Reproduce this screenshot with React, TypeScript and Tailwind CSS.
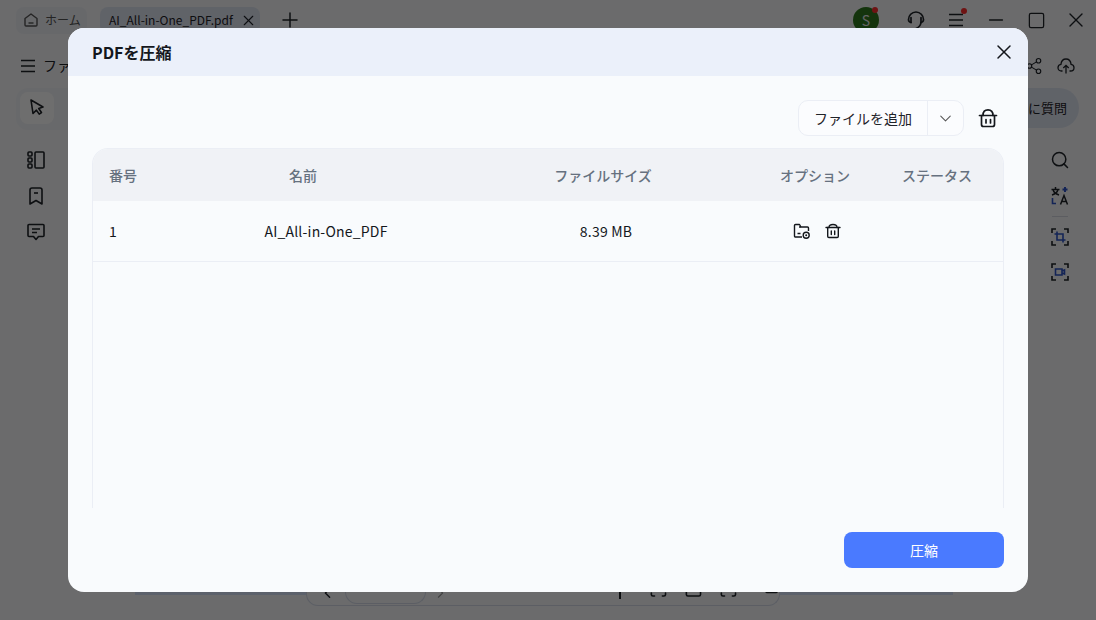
import { ChevronDown, ChevronLeft, ChevronRight, Minus, Plus, Scan, Search, Share2, Square, X } from 'lucide-react';

const jpFont = { fontFamily: '"Noto Sans CJK JP", "Noto Sans", sans-serif' };

function HomeIcon() {
  return (
    <svg width="16" height="16" viewBox="0 0 16 16" fill="none" stroke="currentColor" strokeWidth="1.4">
      <path d="M1 6.5 7 2l6 4.500V13a1 1 0 0 1-1 1H2a1 1 0 0 1-1-1z" strokeLinejoin="round" />
      <path d="M4.500 11h5" />
    </svg>
  );
}

function Headset() {
  return (
    <svg width="20" height="20" viewBox="0 0 20 20" fill="none" stroke="currentColor" strokeWidth="1.7" strokeLinecap="round">
      <path d="M5 12.500C3.400 12.200 2.500 11 2.500 9.500 2.500 5.500 5.800 2 10 2s7.500 3.500 7.500 7.500c0 1.500-.9 2.700-2.500 3" />
      <path d="M5 7.500v5M15 7.500v5" />
      <path d="M15 12.500c-.4 2.800-2 4.800-5 6" />
    </svg>
  );
}

function MenuLines({ size = 14 }: { size?: number }) {
  return (
    <svg width={size} height={size} viewBox="0 0 14 14" fill="none" stroke="currentColor" strokeWidth="1.5">
      <path d="M0 1.500h14M0 7h14M0 12.500h14" />
    </svg>
  );
}

function UploadCloud() {
  return (
    <svg width="18" height="18" viewBox="0 0 18 18" fill="none" stroke="currentColor" strokeWidth="1.3">
      <path d="M5.500 14H4.500C2.500 14 1 12.500 1 10.700c0-1.700 1.200-3 2.900-3.300C4.300 4.200 6.400 2 9 2s4.700 2.200 5.100 5.400c1.700.3 2.900 1.600 2.900 3.300 0 1.800-1.500 3.300-3.500 3.300h-1" />
      <path d="M9 16.500V8.500M6.300 11 9 8.300 11.700 11" />
    </svg>
  );
}

function CursorIcon() {
  return (
    <svg width="18" height="18" viewBox="0 0 18 18" fill="none" stroke="currentColor" strokeWidth="1.6" strokeLinejoin="round">
      <path d="M3 1 15 8l-4.300 1.500 2.800 4-2.300 1.600-2.800-4L5 14.500z" />
    </svg>
  );
}

function SidePanel() {
  return (
    <svg width="18" height="18" viewBox="0 0 18 18" fill="none" stroke="currentColor" strokeWidth="1.6">
      <rect x="1" y="1" width="4" height="4" rx="1" />
      <rect x="1" y="7" width="4" height="4" rx="1" />
      <rect x="1" y="13" width="4" height="4" rx="1" />
      <rect x="8" y="1" width="9" height="16" rx="1" />
    </svg>
  );
}

function Bookmark() {
  return (
    <svg width="18" height="18" viewBox="0 0 18 18" fill="none" stroke="currentColor" strokeWidth="1.6" strokeLinejoin="round">
      <path d="M3 3a2 2 0 0 1 2-2h8a2 2 0 0 1 2 2v14l-6-3.500L3 17z" />
      <path d="M7 6h4" />
    </svg>
  );
}

function Comment() {
  return (
    <svg width="18" height="18" viewBox="0 0 18 18" fill="none" stroke="currentColor" strokeWidth="1.6" strokeLinejoin="round">
      <path d="M2 1.500h14a1 1 0 0 1 1 1v10a1 1 0 0 1-1 1h-4.500L9 16.500 6.500 13.500H2a1 1 0 0 1-1-1v-10a1 1 0 0 1 1-1z" />
      <path d="M5 6h8M5 9.500h5" />
    </svg>
  );
}

function Translate() {
  return (
    <svg width="20" height="20" viewBox="0 0 20 20" fill="none" stroke="#1f2329" strokeWidth="1.500">
      <path d="M1.500 3.500h8M5.500 1v2.500M3 3.500c.6 2.500 2.700 4.500 6 5.500M8 3.500c-.6 2.500-2.700 4.500-6 5.500" />
      <path d="M10.500 18.500 14 9.500l3.500 9M11.700 15.500h4.600" />
      <path d="M15 1v5M12.500 3.500h5" stroke="#2f55c8" strokeWidth="2" />
      <path d="M2.500 12v5.500H6" stroke="#2f55c8" strokeWidth="1.600" />
    </svg>
  );
}

function CornerFrame({ video }: { video?: boolean }) {
  return (
    <svg width="18" height="18" viewBox="0 0 18 18" fill="none" stroke="#1f2329" strokeWidth="1.600">
      <path d="M1 5V1h4M13 1h4v4M17 13v4h-4M5 17H1v-4" />
      {video ? (
        <path d="M4.500 6h6.500v6H4.500zM11 8l2.500-1v4L11 10z" stroke="#2f55c8" />
      ) : (
        <path d="M3.500 6H12v8.500M6 3.500V12h8.500" stroke="#2f55c8" />
      )}
    </svg>
  );
}

function FolderGear() {
  return (
    <svg width="18" height="18" viewBox="0 0 18 18" fill="none" stroke="#14171c" strokeWidth="1.400" strokeLinejoin="round">
      <path d="M9 15H2.500a1 1 0 0 1-1-1V3.500a1 1 0 0 1 1-1h4l1.500 2.500h6.500a1 1 0 0 1 1 1V9" />
      <path d="M8 5H6" />
      <path d="M4.500 11.500H7.500" />
      <circle cx="13.200" cy="13.200" r="3" />
      <circle cx="13.200" cy="13.200" r="1" fill="#14171c" stroke="none" />
    </svg>
  );
}

function TrashSmall() {
  return (
    <svg width="16" height="16" viewBox="0 0 16 16" fill="none" stroke="#14171c" strokeWidth="1.400" strokeLinejoin="round" strokeLinecap="round">
      <path d="M1 4.500h14" />
      <path d="M4 4.500C4 2.500 5.500 1.500 8 1.500s4 1 4 3" />
      <path d="M2.700 4.500v8.800a1.200 1.200 0 0 0 1.200 1.200h8.200a1.200 1.200 0 0 0 1.200-1.200V4.500" />
      <path d="M6.300 8v3.500M9.700 8v3.500" />
    </svg>
  );
}

function Basket() {
  return (
    <svg width="20" height="20" viewBox="0 0 20 20" fill="none" stroke="#14171c" strokeWidth="1.700" strokeLinejoin="round" strokeLinecap="round">
      <path d="M1.500 7.500h17" />
      <path d="M5 7.500C5 3.500 6.800 1.800 10 1.800s5 1.700 5 5.700" />
      <path d="M3.500 7.500v9a2 2 0 0 0 2 2h9a2 2 0 0 0 2-2v-9" />
      <path d="M8 11.500v3.500M12.500 11.500v3.500" />
    </svg>
  );
}

function AppBackground() {
  return (
    <div className="flex h-[620px] w-[1096px] flex-col overflow-hidden bg-[#f7f8fb] text-[#1f2329]">
      <div className="flex h-10 items-center whitespace-nowrap pl-4">
        <div className="flex h-[27px] w-[71px] items-center gap-[5px] rounded-lg bg-[#eff1f6] pl-[8px] text-[12px] text-[#555]">
          <HomeIcon />
          <span>ホーム</span>
        </div>
        <div className="ml-[13px] flex h-[27px] w-[160px] items-center justify-between rounded-lg bg-[#dfe5f2] pl-[9px] pr-[3px] text-[12px]">
          <span>AI_All-in-One_PDF.pdf</span>
          <X size={17} strokeWidth={1.6} />
        </div>
        <Plus size={24} strokeWidth={1.5} className="ml-[18px]" />
        <div className="ml-auto flex items-center">
          <div className="relative mr-[17px] flex h-[26px] w-[26px] items-center justify-center rounded-full bg-[#2f7a1e] text-[14px] text-[#e5e7eb]">
            S
            <span className="absolute right-[1px] top-0 h-[6px] w-[6px] rounded-full bg-[#ff2d2d]" />
          </div>
          <span className="flex w-10 justify-center"><Headset /></span>
          <span className="relative flex w-10 justify-center">
            <MenuLines />
            <span className="absolute right-[9px] -top-[5px] h-[6px] w-[6px] rounded-full bg-[#ff2d2d]" />
          </span>
          <span className="flex w-10 justify-center"><Minus size={22} strokeWidth={1.5} /></span>
          <span className="flex w-10 justify-center"><Square size={19} strokeWidth={1.6} /></span>
          <span className="flex w-10 justify-center"><X size={24} strokeWidth={1.4} /></span>
        </div>
      </div>

      <div className="flex h-12 items-center pl-[21px] pr-[21px] pt-[3px]">
        <MenuLines />
        <span className="ml-[8px] text-[14px]">ファイル</span>
        <span className="ml-auto"><Share2 size={18} strokeWidth={1.5} /></span>
        <span className="ml-[14px]"><UploadCloud /></span>
      </div>

      <div className="flex h-[42px] items-start pl-4 pr-[17px]">
        <div className="flex h-[42px] w-[300px] items-start rounded-xl bg-[#f2f3f7] pl-1 pt-1">
          <div className="flex h-[32px] w-[34px] items-center justify-center rounded-lg bg-white">
            <CursorIcon />
          </div>
        </div>
        <div className="ml-auto flex h-[40px] items-center rounded-full bg-[#dfe5f2] pl-6 pr-3 text-[13px]">AIに質問</div>
      </div>

      <div className="flex flex-1 justify-between pl-[27px] pr-[27px] pt-[21px]">
        <div className="flex w-[18px] flex-col gap-[18px]">
          <SidePanel />
          <Bookmark />
          <Comment />
        </div>
        <div className="flex w-[18px] flex-col items-center">
          <Search size={20} strokeWidth={1.8} className="-mt-[1px]" />
          <span className="mt-[16px] flex"><Translate /></span>
          <span className="mt-[10px] h-px w-4 shrink-0 bg-[#d5d8e0]" />
          <span className="mt-[11px] flex"><CornerFrame /></span>
          <span className="mt-[17px] flex"><CornerFrame video /></span>
        </div>
      </div>

      <div className="relative h-[54px] shrink-0">
        <div className="absolute left-[135px] top-0 h-[29px] w-[818px] bg-[#d6e2f8]" />
        <div className="relative ml-[306px] flex h-[40px] w-[474px] items-center rounded-b-xl border border-t-0 border-[#d5dae8] bg-[#f7f8fb] pl-[12px]">
          <ChevronLeft size={18} strokeWidth={2} className="mt-[14px]" />
          <div className="ml-[9px] h-[36px] w-[86px] rounded-b-xl border border-t-0 border-[#d5dae8]" />
          <ChevronRight size={18} strokeWidth={1.5} className="ml-[6px] mt-[14px] text-[#999]" />
          <span className="ml-[170px] h-[26px] w-[2px] bg-[#1f2329]" />
          <Scan size={20} strokeWidth={2} className="ml-[28px] mt-[6px]" />
          <Square size={20} strokeWidth={2} className="ml-[16px] mt-[6px]" />
          <Scan size={20} strokeWidth={2} className="ml-[16px] mt-[6px]" />
          <Square size={16} strokeWidth={2} className="ml-[26px] mt-[2px]" />
        </div>
      </div>
    </div>
  );
}

export default function App() {
  return (
    <div className="relative h-[620px] w-[1096px] overflow-hidden" style={jpFont}>
      <AppBackground />
      <div className="absolute inset-0 bg-black/[.57]" />
      <div className="absolute left-[68px] top-[28px] flex h-[564px] w-[960px] flex-col overflow-hidden rounded-2xl bg-[#f9fbfd]">
        <div className="flex h-12 shrink-0 items-center justify-between bg-[#ebf0fa] pl-6 pr-3">
          <span className="text-[16px] font-bold text-[#14171c]">PDFを圧縮</span>
          <X size={24} strokeWidth={1.5} className="text-[#14171c]" />
        </div>

        <div className="flex flex-1 flex-col px-6 pt-6">
          <div className="flex items-center justify-end">
            <div className="flex h-9 w-[166px] items-center rounded-[10px] border border-[#ebeef5] bg-[#fbfcfe] text-[14px] text-[#1f2329]">
              <span className="flex-1 text-center">ファイルを追加</span>
              <span className="flex h-full w-9 items-center justify-center border-l border-[#ebeef5]">
                <ChevronDown size={19} strokeWidth={1.3} className="text-[#555]" />
              </span>
            </div>
            <span className="ml-[14px] mr-[6px] flex"><Basket /></span>
          </div>

          <div className="mt-3 h-[360px] overflow-hidden rounded-t-2xl border-x border-t border-[#ebeef5]">
            <div className="flex h-[52px] items-center bg-[#f0f2f6] pl-4 text-[14px] font-medium text-[#66717f]">
              <span className="w-[60px]">番号</span>
              <span className="w-[268px] text-center">名前</span>
              <span className="w-[332px] text-center">ファイルサイズ</span>
              <span className="w-[92px] text-center">オプション</span>
              <span className="ml-[10px] w-[132px] text-center">ステータス</span>
            </div>
            <div className="flex h-[61px] items-center border-b border-[#ebeef5] pl-4 text-[14px] tracking-[0.2px] text-[#14171c]">
              <span className="w-[60px]">1</span>
              <span className="w-[314px] text-center">AI_All-in-One_PDF</span>
              <span className="w-[246px] text-center">8.39 MB</span>
              <span className="flex w-[176px] items-center justify-center gap-[14px]">
                <FolderGear />
                <TrashSmall />
              </span>
            </div>
          </div>

          <div className="mt-[24px] flex justify-end">
            <button className="h-9 w-40 rounded-lg bg-[#4a7aff] text-[14px] text-white">圧縮</button>
          </div>
        </div>
      </div>
    </div>
  );
}
